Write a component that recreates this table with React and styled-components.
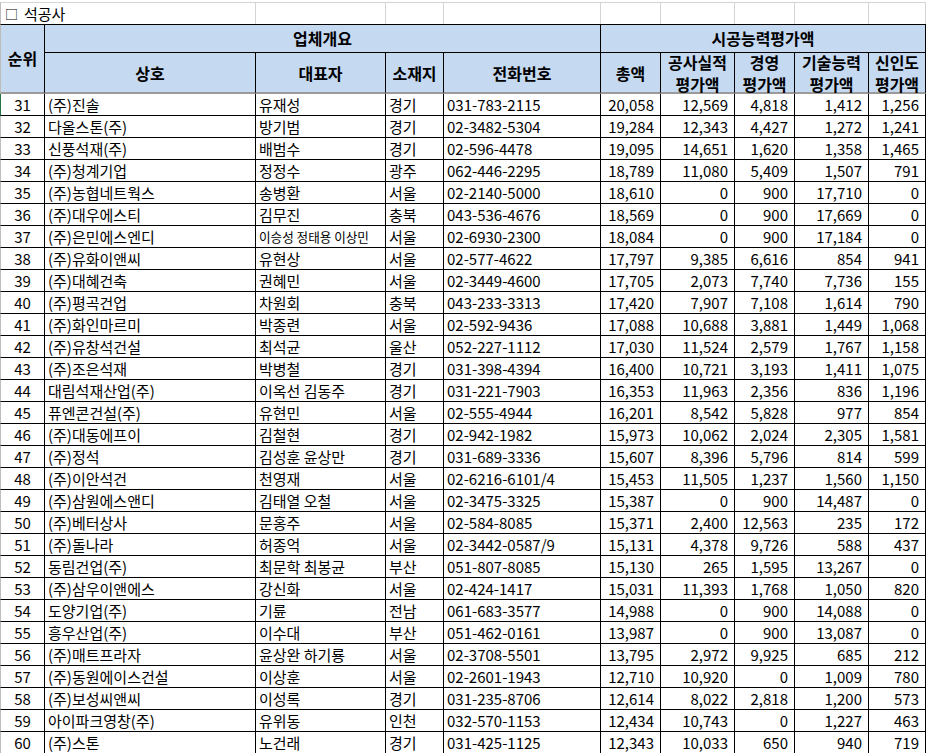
import React from "react";
import styled, { createGlobalStyle } from "styled-components";

// column widths incl. the right border line
const COLS = [45, 211, 130, 58, 157, 60, 74, 60, 74, 57];

const rows = [
  [31, "(주)진솔", "유재성", "경기", "031-783-2115", "20,058", "12,569", "4,818", "1,412", "1,256"],
  [32, "다올스톤(주)", "방기범", "경기", "02-3482-5304", "19,284", "12,343", "4,427", "1,272", "1,241"],
  [33, "신풍석재(주)", "배범수", "경기", "02-596-4478", "19,095", "14,651", "1,620", "1,358", "1,465"],
  [34, "(주)청계기업", "정정수", "광주", "062-446-2295", "18,789", "11,080", "5,409", "1,507", "791"],
  [35, "(주)농협네트웍스", "송병환", "서울", "02-2140-5000", "18,610", "0", "900", "17,710", "0"],
  [36, "(주)대우에스티", "김무진", "충북", "043-536-4676", "18,569", "0", "900", "17,669", "0"],
  [37, "(주)은민에스엔디", "이승성 정태용 이상민", "서울", "02-6930-2300", "18,084", "0", "900", "17,184", "0"],
  [38, "(주)유화이앤씨", "유현상", "서울", "02-577-4622", "17,797", "9,385", "6,616", "854", "941"],
  [39, "(주)대혜건축", "권혜민", "서울", "02-3449-4600", "17,705", "2,073", "7,740", "7,736", "155"],
  [40, "(주)평곡건업", "차원회", "충북", "043-233-3313", "17,420", "7,907", "7,108", "1,614", "790"],
  [41, "(주)화인마르미", "박종련", "서울", "02-592-9436", "17,088", "10,688", "3,881", "1,449", "1,068"],
  [42, "(주)유창석건설", "최석균", "울산", "052-227-1112", "17,030", "11,524", "2,579", "1,767", "1,158"],
  [43, "(주)조은석재", "박병철", "경기", "031-398-4394", "16,400", "10,721", "3,193", "1,411", "1,075"],
  [44, "대림석재산업(주)", "이옥선 김동주", "경기", "031-221-7903", "16,353", "11,963", "2,356", "836", "1,196"],
  [45, "퓨엔콘건설(주)", "유현민", "서울", "02-555-4944", "16,201", "8,542", "5,828", "977", "854"],
  [46, "(주)대동에프이", "김철현", "경기", "02-942-1982", "15,973", "10,062", "2,024", "2,305", "1,581"],
  [47, "(주)정석", "김성훈 윤상만", "경기", "031-689-3336", "15,607", "8,396", "5,796", "814", "599"],
  [48, "(주)이안석건", "천영재", "서울", "02-6216-6101/4", "15,453", "11,505", "1,237", "1,560", "1,150"],
  [49, "(주)삼원에스앤디", "김태열 오철", "서울", "02-3475-3325", "15,387", "0", "900", "14,487", "0"],
  [50, "(주)베터상사", "문홍주", "서울", "02-584-8085", "15,371", "2,400", "12,563", "235", "172"],
  [51, "(주)돌나라", "허종억", "서울", "02-3442-0587/9", "15,131", "4,378", "9,726", "588", "437"],
  [52, "동림건업(주)", "최문학 최봉균", "부산", "051-807-8085", "15,130", "265", "1,595", "13,267", "0"],
  [53, "(주)삼우이앤에스", "강신화", "서울", "02-424-1417", "15,031", "11,393", "1,768", "1,050", "820"],
  [54, "도양기업(주)", "기륜", "전남", "061-683-3577", "14,988", "0", "900", "14,088", "0"],
  [55, "흥우산업(주)", "이수대", "부산", "051-462-0161", "13,987", "0", "900", "13,087", "0"],
  [56, "(주)매트프라자", "윤상완 하기룡", "서울", "02-3708-5501", "13,795", "2,972", "9,925", "685", "212"],
  [57, "(주)동원에이스건설", "이상훈", "서울", "02-2601-1943", "12,710", "10,920", "0", "1,009", "780"],
  [58, "(주)보성씨앤씨", "이성록", "경기", "031-235-8706", "12,614", "8,022", "2,818", "1,200", "573"],
  [59, "아이파크영창(주)", "유위동", "인천", "032-570-1153", "12,434", "10,743", "0", "1,227", "463"],
  [60, "(주)스톤", "노건래", "경기", "031-425-1125", "12,343", "10,033", "650", "940", "719"],
];

const subHeads = [
  ["상호"],
  ["대표자"],
  ["소재지"],
  ["전화번호"],
  ["총액"],
  ["공사실적", "평가액"],
  ["경영", "평가액"],
  ["기술능력", "평가액"],
  ["신인도", "평가액"],
];

export default function App() {
  return (
    <>
      <GlobalStyle />
      <Sheet>
        <colgroup>
          {COLS.map((w, i) => (
            <Col key={i} $w={w} />
          ))}
        </colgroup>
        <thead>
          <TitleRow>
            <TitleCell colSpan={2}>
              <Box>□</Box>석공사
            </TitleCell>
            {COLS.slice(2).map((_, i) => (
              <GridCell key={i} />
            ))}
          </TitleRow>
          <HeadRow $h={29}>
            <RankHead rowSpan={2}>순위</RankHead>
            <GroupHead colSpan={4}>업체개요</GroupHead>
            <GroupHead colSpan={5}>시공능력평가액</GroupHead>
          </HeadRow>
          <HeadRow $h={41}>
            {subHeads.map((lines, i) => (
              <SubHead key={i}>
                <Lines>
                  {lines.map((l, j) => (
                    <span key={j}>{l}</span>
                  ))}
                </Lines>
              </SubHead>
            ))}
          </HeadRow>
        </thead>
        <tbody>
          {rows.map((r, idx) => (
            <DataRow key={r[0]}>
              <RankCell $active={idx === 0}>{r[0]}</RankCell>
              <TextCell>{r[1]}</TextCell>
              <TextCell $small={r[2].length > 8}>{r[2]}</TextCell>
              <TextCell>{r[3]}</TextCell>
              <TextCell>{r[4]}</TextCell>
              {r.slice(5).map((v, i) => (
                <NumCell key={i}>{v}</NumCell>
              ))}
            </DataRow>
          ))}
        </tbody>
      </Sheet>
    </>
  );
}

const GlobalStyle = createGlobalStyle`
  body {
    margin: 0;
    background: #fff;
    overflow: hidden;
  }
`;

const Sheet = styled.table`
  margin-top: 2px;
  width: 926px;
  table-layout: fixed;
  border-collapse: separate;
  border-spacing: 0;
  font-family: "Noto Sans CJK KR", "Noto Sans", sans-serif;
  font-size: 15px;
  color: #000;
`;

const Col = styled.col`
  width: ${(p) => p.$w}px;
`;

const TitleRow = styled.tr`
  height: 22px;
`;

const GridCell = styled.td`
  padding: 0;
  height: 21px;
  line-height: 21px;
  border-top: 1px solid #d4d4d4;
  border-right: 1px solid #d4d4d4;
`;

const TitleCell = styled(GridCell)`
  padding: 0 0 0 4px;
  white-space: nowrap;
  overflow: hidden;
  border-left: 1px solid #bdbdbd;
`;

const Box = styled.span`
  display: inline-block;
  width: 19px;
  font-size: 13px;
  line-height: 1;
  vertical-align: 1px;
`;

const HeadRow = styled.tr`
  height: ${(p) => p.$h}px;
`;

const HeadBase = styled.th`
  padding: 0;
  background: #c5d9f1;
  font-weight: 700;
  font-size: 16px;
  line-height: 21px;
  text-align: center;
  vertical-align: middle;
  border-right: 1px solid #000;
`;

const RankHead = styled(HeadBase)`
  border-top: 1px solid #000;
  border-left: 1px solid #bdbdbd;
  border-bottom: 2px solid #9a9a9a;
`;

const GroupHead = styled(HeadBase)`
  height: 27px;
  border-top: 1px solid #000;
  border-bottom: 1px solid #000;
`;

const SubHead = styled(HeadBase)`
  border-bottom: 2px solid #9a9a9a;
`;

const Lines = styled.div`
  height: 39px;
  display: flex;
  flex-direction: column;
  align-items: center;
  justify-content: center;
  line-height: 22px;
  white-space: nowrap;
`;

const DataRow = styled.tr`
  height: 22px;
`;

const Cell = styled.td`
  padding: 0;
  height: 21px;
  line-height: 21px;
  white-space: nowrap;
  overflow: hidden;
  vertical-align: middle;
  border-right: 1px solid #000;
  border-bottom: 1px solid #000;
`;

const RankCell = styled(Cell)`
  text-align: center;
  border-left: 1px solid ${(p) => (p.$active ? "#217346" : "#bdbdbd")};
`;

const TextCell = styled(Cell)`
  text-align: left;
  padding-left: 3px;
  font-size: ${(p) => (p.$small ? "12.6px" : "inherit")};
`;

const NumCell = styled(Cell)`
  text-align: right;
  padding-right: 6px;
`;
